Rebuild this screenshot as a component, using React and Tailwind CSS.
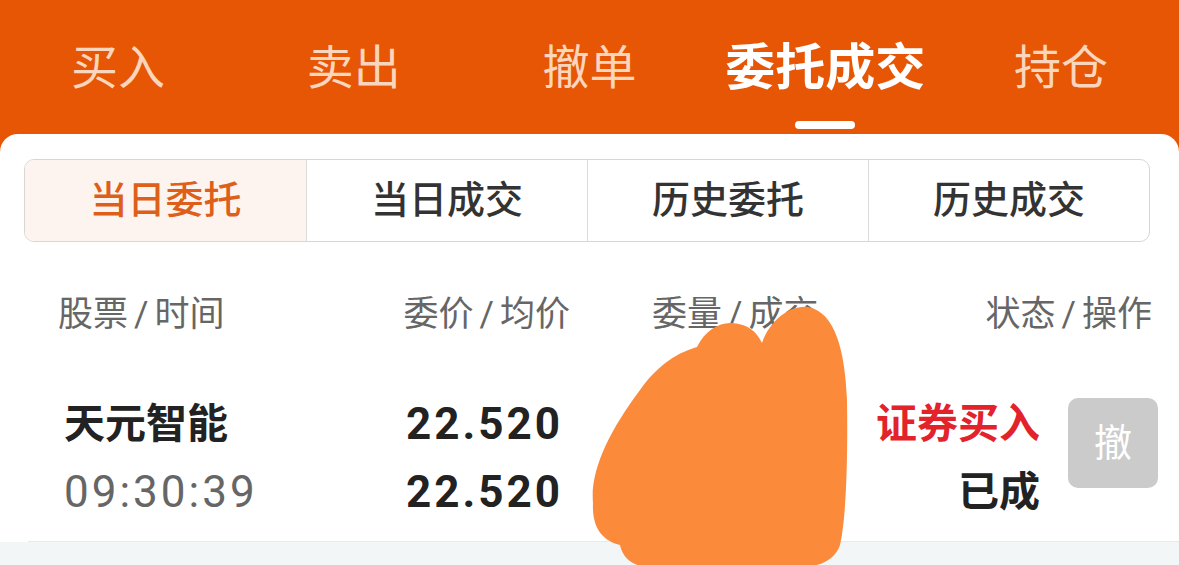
import React from 'react';

const topTabs = ["买入", "卖出", "撤单", "委托成交", "持仓"];
const subTabs = ["当日委托", "当日成交", "历史委托", "历史成交"];

const Label = ({ a, b }) => (
  <>
    {a}
    <span className="mx-[6px]">/</span>
    {b}
  </>
);

const App = () => {
  const activeTop = 3;
  const activeSub = 0;

  return (
    <div
      className="relative w-[1179px] h-[565px] overflow-hidden bg-[#e65605] flex flex-col"
      style={{ fontFamily: 'Roboto, "Noto Sans CJK SC", sans-serif' }}
    >
      {/* Top tabs */}
      <div className="h-[134px] grid grid-cols-5 shrink-0">
        {topTabs.map((t, i) => (
          <div key={t} className="flex flex-col items-center">
            <span
              className={
                i === activeTop
                  ? "mt-[43px] leading-[50px] text-[50px] font-bold text-white"
                  : "mt-[44px] leading-[48px] text-[47px] text-[#fbd5bc]"
              }
            >
              {t}
            </span>
            {i === activeTop && (
              <div className="mt-[28px] w-[60px] h-[8px] rounded-full bg-white" />
            )}
          </div>
        ))}
      </div>

      {/* Card */}
      <div className="flex-1 bg-white rounded-t-[18px] flex flex-col">
        {/* Segmented control */}
        <div className="mt-[25px] mx-[24px] mr-[29px] h-[83px] border border-[#dcd6d2] rounded-[10px] grid grid-cols-4 overflow-hidden">
          {subTabs.map((t, i) => (
            <div
              key={t}
              className={`flex items-center justify-center text-[38px] font-medium ${
                i > 0 ? "border-l border-[#dcdcdc]" : ""
              } ${i === activeSub ? "bg-[#fdf4ef] text-[#dd5f1a]" : "text-[#333333]"}`}
            >
              {t}
            </div>
          ))}
        </div>

        {/* Column headers */}
        <div className="mt-[55px] flex items-center text-[35px] leading-[36px] text-[#666666]">
          <div className="w-[400px] pl-[58px]"><Label a="股票" b="时间" /></div>
          <div className="w-[170px] text-right"><Label a="委价" b="均价" /></div>
          <div className="ml-[82px]"><Label a="委量" b="成交" /></div>
          <div className="flex-1 text-right pr-[27px]"><Label a="状态" b="操作" /></div>
        </div>

        {/* Order row */}
        <div className="mt-[65px] h-[144px] ml-[28px] border-b border-[#e6eaec] flex items-start">
          <div className="w-[372px] pl-[36px] pt-[5px] flex flex-col">
            <span className="leading-[42px] text-[41px] font-bold text-[#222222]">天元智能</span>
            <span className="mt-[25px] leading-[44px] text-[44px] text-[#666666] tracking-[3px]">09:30:39</span>
          </div>
          <div className="w-[160px] pt-[5px] flex flex-col items-end font-bold text-[#222222] tracking-[3px]">
            <span className="leading-[42px] text-[44px] -mr-[3px]">22.520</span>
            <span className="mt-[25px] leading-[44px] text-[44px] -mr-[3px]">22.520</span>
          </div>
          <div className="flex-1" />
          <div className="pt-[5px] flex flex-col items-end font-bold">
            <span className="leading-[42px] text-[41px] text-[#e3232b]">证券买入</span>
            <span className="mt-[25px] leading-[44px] text-[41px] text-[#222222]">已成</span>
          </div>
          <button className="ml-[28px] mr-[21px] w-[90px] h-[90px] rounded-[10px] bg-[#cbcbcb] text-white text-[38px] flex items-center justify-center">
            撤
          </button>
        </div>

        <div className="flex-1 bg-[#f3f6f7]" />
      </div>

      {/* Redaction scribble */}
      <svg className="absolute left-0 top-0 pointer-events-none" width="1179" height="565" viewBox="0 0 1179 565">
        <path
          d="M 593 503 C 590 470, 610 430, 640 390 C 660 362, 680 352, 697 347 C 705 330, 720 322, 732 323 C 748 324, 757 332, 762 343 C 770 320, 790 305, 808 307 C 835 312, 845 350, 847 400 C 848 460, 846 520, 840 545 C 835 560, 820 567, 800 567 L 650 567 C 630 567, 622 555, 620 545 C 600 540, 592 525, 593 503 Z"
          fill="#fb8a3b"
        />
      </svg>
    </div>
  );
};

export default App;
